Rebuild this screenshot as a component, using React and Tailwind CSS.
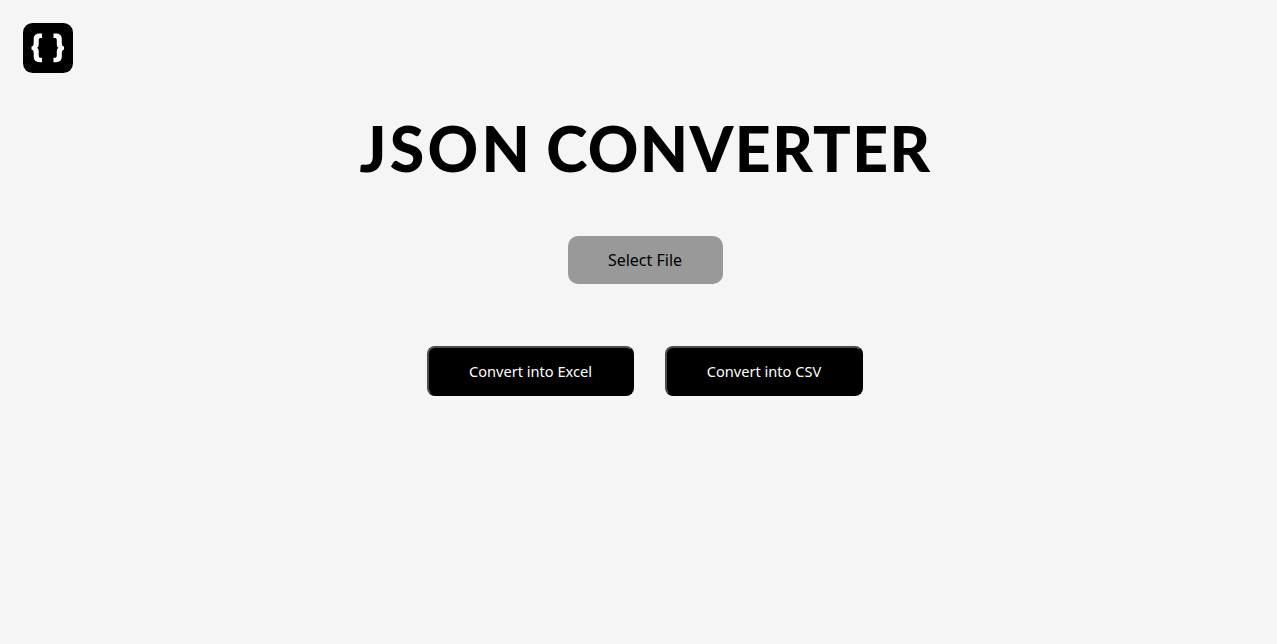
function Logo() {
  return (
    <svg className="block h-[50px] w-[50px]" viewBox="0 0 50 50" aria-hidden="true">
      <rect width="50" height="50" rx="9.5" fill="#000" />
      <path
        d="M19 10.5H16.5Q10.7 10.5 10.7 16V20.5Q10.7 23 8.5 23.6V26.4Q10.7 27 10.7 29.5V33.8Q10.7 39.2 16.5 39.2H19V34.8H17.3Q15.7 34.8 15.7 32.8V28.3Q15.7 25.5 14 24.8Q15.7 24.1 15.7 21.5V17Q15.7 15 17.3 15H19Z"
        fill="#fff"
      />
      <path
        d="M30.5 10.5H33Q38.8 10.5 38.8 16V20.5Q38.8 23 41 23.6V26.4Q38.8 27 38.8 29.5V33.8Q38.8 39.2 33 39.2H30.5V34.8H32.2Q33.8 34.8 33.8 32.8V28.3Q33.8 25.5 35.5 24.8Q33.8 24.1 33.8 21.5V17Q33.8 15 32.2 15H30.5Z"
        fill="#fff"
      />
    </svg>
  );
}

export default function App() {
  return (
    <div className="h-screen overflow-hidden bg-[#f5f5f5] font-['Noto_Sans',sans-serif] text-black">
      <header className="pt-[23px] pl-[23px]">
        <Logo />
      </header>
      <main className="flex flex-col items-center pl-[13px]">
        <h1 className="mt-[35px] flex h-[80px] items-center gap-[13px] pl-[1px] font-['Lato',sans-serif] text-[62.5px] leading-[80px] font-black whitespace-nowrap">
          <span className="tracking-[3.3px]">JSON</span>
          <span className="tracking-[1.4px]">CONVERTER</span>
        </h1>
        <button className="mt-[47.5px] flex h-[48px] w-[155px] items-center justify-center rounded-[10px] bg-[#999999] text-[16px]">
          Select File
        </button>
        <div className="mt-[62.5px] flex gap-[31px] text-[14.6px] text-white">
          <button className="flex h-[50px] w-[207px] items-center justify-center rounded-[8px] border-2 border-t-[#4c4c4c] border-r-black border-b-black border-l-[#4c4c4c] bg-black pt-[2px]">
            Convert into Excel
          </button>
          <button className="flex h-[50px] w-[198px] items-center justify-center rounded-[8px] border-2 border-t-[#4c4c4c] border-r-black border-b-black border-l-[#4c4c4c] bg-black pt-[2px]">
            Convert into CSV
          </button>
        </div>
      </main>
    </div>
  );
}
